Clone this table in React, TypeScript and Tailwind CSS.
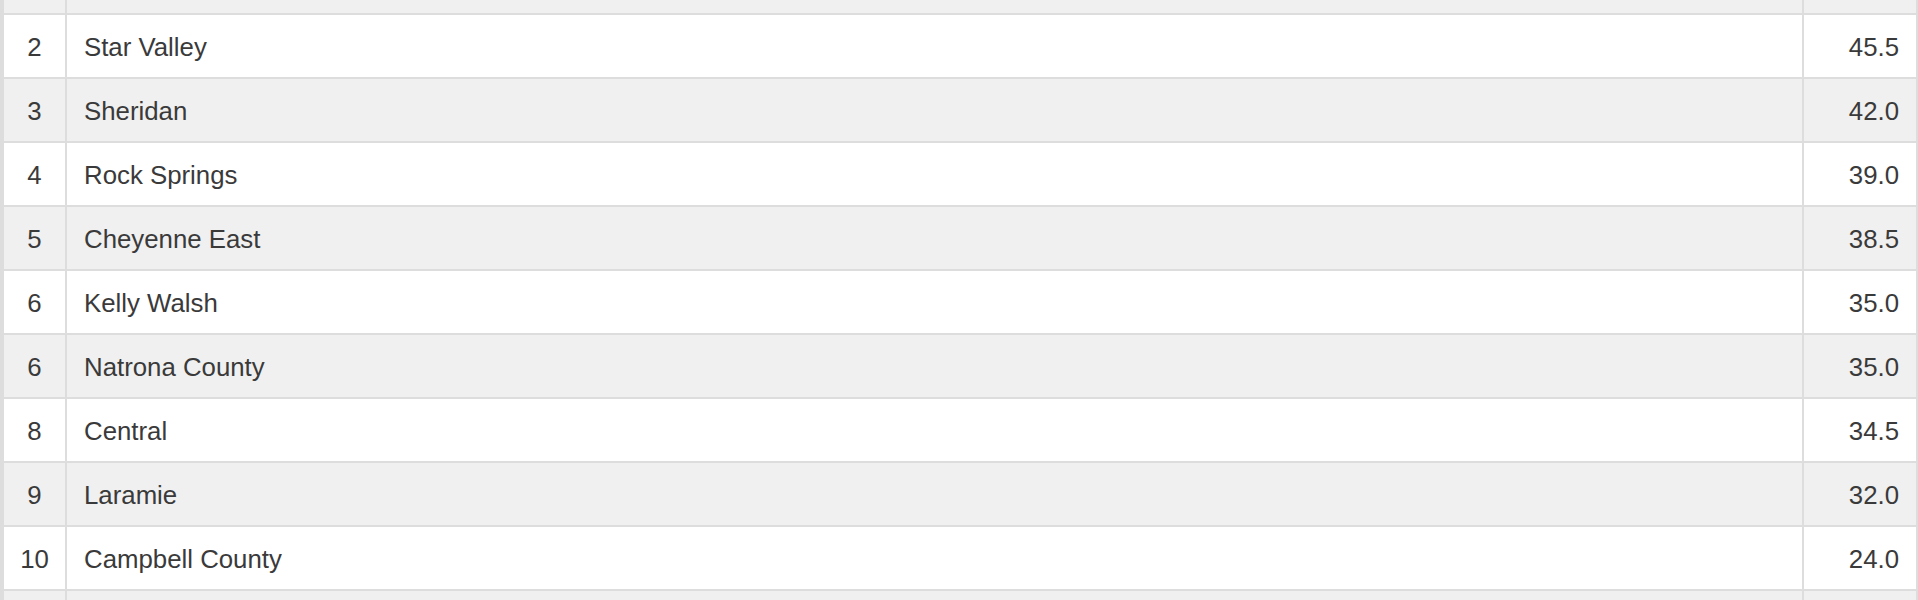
const rows = [
  { rank: "1", name: "", score: "" },
  { rank: "2", name: "Star Valley", score: "45.5" },
  { rank: "3", name: "Sheridan", score: "42.0" },
  { rank: "4", name: "Rock Springs", score: "39.0" },
  { rank: "5", name: "Cheyenne East", score: "38.5" },
  { rank: "6", name: "Kelly Walsh", score: "35.0" },
  { rank: "6", name: "Natrona County", score: "35.0" },
  { rank: "8", name: "Central", score: "34.5" },
  { rank: "9", name: "Laramie", score: "32.0" },
  { rank: "10", name: "Campbell County", score: "24.0" },
  { rank: "11", name: "", score: "" },
];

export default function App() {
  return (
    <div className="w-[1918px] h-[600px] overflow-hidden bg-white">
      <div
        className="-mt-[49px] border-l-4 border-r-2 border-[#dddddd] text-[#3a3a3a] text-[25.8px]"
        style={{ fontFamily: '"Liberation Sans", Arial, Helvetica, sans-serif' }}
      >
        {rows.map((r, i) => (
          <div
            key={i}
            className={
              "flex h-[64px] pt-[2px] border-b-2 border-[#dddddd] " +
              (i % 2 === 0 ? "bg-[#f0f0f0]" : "bg-white")
            }
          >
            <div className="w-[63px] shrink-0 -mt-[2px] pt-[2px] border-r-2 border-[#dddddd] flex items-center justify-center">
              {i === 0 || i === rows.length - 1 ? "" : r.rank}
            </div>
            <div className="flex-1 -mt-[2px] pt-[2px] border-r-2 border-[#dddddd] flex items-center pl-[17px]">
              {r.name}
            </div>
            <div className="w-[112px] shrink-0 flex items-center justify-end pr-[17px]">
              {r.score}
            </div>
          </div>
        ))}
      </div>
    </div>
  );
}
